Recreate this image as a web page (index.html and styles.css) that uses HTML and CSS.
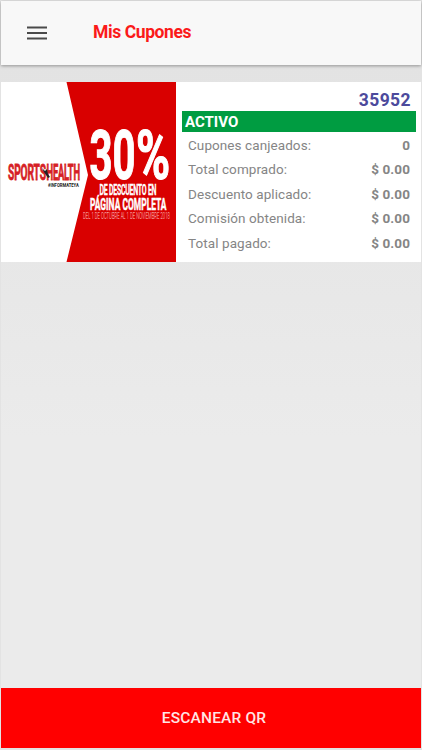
FILE: index.html
```html
<!DOCTYPE html>
<html lang="es">
<head>
    <meta charset="UTF-8">
    <meta name="viewport" content="width=device-width, initial-scale=1.0">
    <title>Mis Cupones</title>
    <link rel="stylesheet" href="styles.css">
</head>
<body>

    <header class="toolbar">
        <button class="menu-button" aria-label="Menu">
            <svg width="22" height="16" viewBox="0 0 22 16">
                <path d="M1 2.5h20M1 8h20M1 13.5h20" stroke="#4a4a4a" stroke-width="2"/>
            </svg>
        </button>
        <h1 class="title">Mis Cupones</h1>
    </header>

    <main class="content">
        <div class="card">
            <svg class="promo" width="175" height="180" viewBox="0 0 175 180">
                <rect width="175" height="180" fill="#fff"/>
                <path d="M65.5 0H175v180H65.5L87 93z" fill="#d90000"/>
                <!-- text is squeezed horizontally to get the condensed look -->
                <g class="promo-text">
                    <text class="brand" transform="translate(7 97.5) scale(.475 1)" textLength="80">SPORTS</text>
                    <text class="brand" transform="translate(45.5 97.5) scale(.435 1)" textLength="77">HEALTH</text>
                    <path d="M41 86l3 3 2-2 1 5 2 3-2 1-2-3-2-3z" fill="#222"/>
                    <text class="tagline" transform="translate(47 104.5) scale(.75 1)" textLength="41">#INFORMATEYA</text>
                    <text class="percent" transform="translate(88.5 97) scale(.59 1)" textLength="78">30</text>
                    <text class="percent" transform="translate(135 97) scale(.68 1)" textLength="50">%</text>
                    <text class="line-one" transform="translate(98.5 112.7) scale(.5 1)" textLength="114">DE DESCUENTO EN</text>
                    <text class="line-two" transform="translate(89 127.5) scale(.51 1)" textLength="150">PÁGINA COMPLETA</text>
                    <text class="dates" transform="translate(82 136.5) scale(.48 1)" textLength="181">DEL 1 DE OCTUBRE AL 1 DE NOVIEMBRE 2018</text>
                </g>
            </svg>
            <div class="info">
                <div class="code">35952</div>
                <div class="status">ACTIVO</div>
                <ul class="totals">
                    <li><span>Cupones canjeados:</span><b>0</b></li>
                    <li><span>Total comprado:</span><b>$ 0.00</b></li>
                    <li><span>Descuento aplicado:</span><b>$ 0.00</b></li>
                    <li><span>Comisión obtenida:</span><b>$ 0.00</b></li>
                    <li><span>Total pagado:</span><b>$ 0.00</b></li>
                </ul>
            </div>
        </div>
    </main>

    <button class="scan-button">ESCANEAR QR</button>

</body>
</html>
```
FILE: styles.css
```css
* {
    box-sizing: border-box;
}

body {
    font-family: Roboto, sans-serif;
    margin: 0;
    padding: 1px 1px 2px;
    height: 100vh;
    display: flex;
    flex-direction: column;
    background-color: #e3e3e3;
    overflow: hidden;
}

button {
    border: none;
    padding: 0;
    font-family: inherit;
    cursor: pointer;
}

/* Top bar */
.toolbar {
    height: 64px;
    flex: none;
    display: flex;
    align-items: center;
    padding-left: 25px;
    background-color: #f8f8f8;
    box-shadow: 0 1px 3px rgba(0, 0, 0, 0.35);
    z-index: 1;
}

.menu-button {
    width: 22px;
    height: 16px;
    background: none;
}

.menu-button svg {
    display: block;
}

.title {
    margin: 0 0 2px 45px;
    font-size: 17.5px;
    line-height: 22px;
    font-weight: 700;
    letter-spacing: -0.4px;
    color: #fb1a1a;
}

.content {
    flex: 1;
    padding-top: 17px;
    background: linear-gradient(#e3e3e3, #ebebeb 60%);
}

/* Coupon card */
.card {
    display: flex;
    height: 180px;
    background-color: #fff;
}

.promo {
    flex: none;
}

.promo-text {
    font-weight: 700;
    fill: #fff;
}

.brand {
    font-size: 21.5px;
    fill: #d61f26;
    stroke: #d61f26;
    stroke-width: 0.8px;
}

.tagline {
    font-size: 5.6px;
    fill: #222;
}

.percent {
    font-size: 68px;
    stroke: #fff;
    stroke-width: 1.2px;
}

.line-one {
    font-size: 14px;
    stroke: #fff;
    stroke-width: 0.3px;
}

.line-two {
    font-size: 16.5px;
    stroke: #fff;
    stroke-width: 0.5px;
}

.dates {
    font-size: 8.8px;
    font-weight: 300;
    fill: #ffd0d0;
}

.info {
    flex: 1;
    padding: 7px 5px 0 6px;
}

.code {
    height: 22px;
    line-height: 22px;
    padding-right: 5px;
    text-align: right;
    font-size: 17.5px;
    font-weight: 700;
    letter-spacing: 0.4px;
    color: #4c4a9c;
}

.status {
    height: 21px;
    line-height: 22px;
    padding-left: 3px;
    background-color: #009c41;
    color: #fff;
    font-size: 15px;
    font-weight: 700;
}

.totals {
    list-style: none;
    margin: 0;
    padding: 1px 6px 0 6px;
    font-size: 13.5px;
    color: #858585;
}

.totals li {
    display: flex;
    justify-content: space-between;
    height: 24.4px;
    line-height: 24.4px;
    letter-spacing: 0.08px;
}

.totals b {
    font-weight: 700;
}

/* Bottom action */
.scan-button {
    height: 60px;
    flex: none;
    background-color: #ff0000;
    color: #ffe5e5;
    font-size: 15.5px;
    font-weight: 500;
    letter-spacing: 0.15px;
    padding-left: 6px;
}
```
